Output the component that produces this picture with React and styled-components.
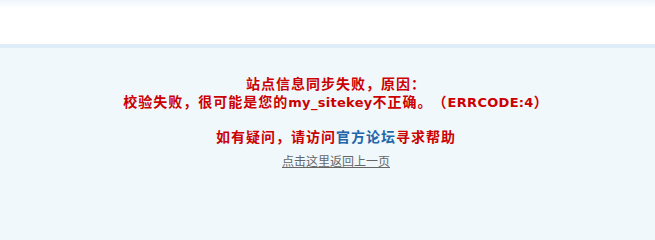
import React from "react";
import styled, { createGlobalStyle } from "styled-components";

const Global = createGlobalStyle`
  html, body { margin: 0; padding: 0; background: #f0f8fc; }
  body { font-family: "Noto Sans CJK SC", "DejaVu Sans", sans-serif; }
`;

const Header = styled.div`
  height: 44px;
  background: linear-gradient(to bottom, #eef5fb 0px, #ffffff 8px, #ffffff 100%);
`;

const Band = styled.div`
  height: 4px;
  background: #deedf7;
`;

const Main = styled.div`
  background: #f0f8fc;
  height: 161px;
  padding: 26px 0 0 17px;
  box-sizing: border-box;
  text-align: center;
  text-spacing-trim: space-all;
`;

const Message = styled.div`
  color: #cc0000;
  font-weight: bold;
  font-size: 14px;
  letter-spacing: 1px;
  line-height: 18px;
`;

const Latin = styled.span`
  font-family: "DejaVu Sans", sans-serif;
  font-size: 13px;
  letter-spacing: 0.3px;
`;

const Help = styled.div`
  margin-top: 15px;
  color: #cc0000;
  font-weight: bold;
  font-size: 14px;
  letter-spacing: 1px;
  line-height: 18px;
`;

const HelpLink = styled.a`
  color: #2366a8;
  text-decoration: none;
`;

const Back = styled.div`
  margin-top: 8px;
  font-size: 12px;
  line-height: 16px;
`;

const BackLink = styled.a`
  color: #666666;
  text-decoration: underline;
`;

export default function App() {
  return (
    <>
      <Global />
      <Header />
      <Band />
      <Main>
        <Message>
          站点信息同步失败，原因：
          <br />
          校验失败，很可能是您的<Latin>my_sitekey</Latin>不正确。（<Latin>ERRCODE:4</Latin>）
        </Message>
        <Help>
          如有疑问，请访问<HelpLink href="#">官方论坛</HelpLink>寻求帮助
        </Help>
        <Back>
          <BackLink href="#">点击这里返回上一页</BackLink>
        </Back>
      </Main>
    </>
  );
}
